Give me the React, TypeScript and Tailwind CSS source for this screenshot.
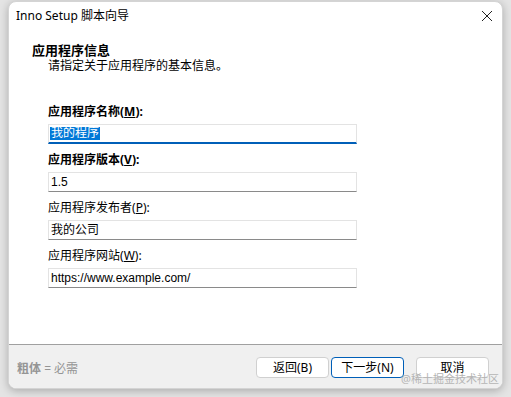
import React from "react";

const font = { fontFamily: '"Noto Sans", "Noto Sans CJK SC", sans-serif' };
const inputFont = { fontFamily: '"Liberation Sans", "Noto Sans CJK SC", sans-serif' };

function Field({
  label,
  hotkey,
  bold,
  value,
  focused,
}: {
  label: string;
  hotkey: string;
  bold?: boolean;
  value: string;
  focused?: boolean;
}) {
  return (
    <div className="flex flex-col">
      <div className={`h-[16px] leading-[16px] text-[12px] text-black ${bold ? "font-bold" : ""}`}>
        {label}(<span className="underline">{hotkey}</span>):
      </div>
      <div
        className={`mt-[4px] h-[20px] w-[309px] bg-white border border-[#e3e3e3] flex items-center px-[1px] text-[12px] ${
          focused ? "border-b-2 border-b-[#005fb8]" : "border-b-[#8a8a8a]"
        }`}
        style={inputFont}
      >
        {focused ? (
          <span className="bg-[#0078d7] text-white leading-[13px] px-[1px]">{value}</span>
        ) : (
          <span className="text-black leading-[16px] px-[1px]">{value}</span>
        )}
      </div>
    </div>
  );
}

export default function App() {
  return (
    <div className="w-[511px] h-[397px] bg-[#e4e4e4] pl-[8px] pt-[1px] overflow-hidden" style={font}>
      <div className="w-[495px] h-[388px] bg-white rounded-[8px] border border-[#d4d4d4] shadow-[0_2px_8px_rgba(0,0,0,0.25)] flex flex-col overflow-hidden">
        <div className="h-[28px] flex items-center justify-between pl-[7px] pr-[8px]">
          <span className="text-[12px] text-black">Inno Setup 脚本向导</span>
          <svg width="12" height="12" viewBox="0 0 12 12" className="mr-[1px]">
            <path d="M1 1 L11 11 M11 1 L1 11" stroke="#222" strokeWidth="1" />
          </svg>
        </div>
        <div className="flex-1 flex flex-col pl-[23px] pt-[12px]">
          <div className="h-[16px] leading-[16px] text-[13px] font-bold text-black">应用程序信息</div>
          <div className="h-[16px] leading-[16px] text-[12px] text-black pl-[16px]">请指定关于应用程序的基本信息。</div>
          <div className="flex flex-col gap-[8px] pl-[16px] mt-[30px]">
            <Field label="应用程序名称" hotkey="M" bold value="我的程序" focused />
            <Field label="应用程序版本" hotkey="V" bold value="1.5" />
            <Field label="应用程序发布者" hotkey="P" value="我的公司" />
            <Field label="应用程序网站" hotkey="W" value="https://www.example.com/" />
          </div>
        </div>
        <div className="h-[44px] border-t border-[#a0a0a0] bg-[#f0f0f0] flex items-start pl-[8px] relative">
          <div className="mt-[15px] text-[12px] text-[#959595]">
            <span className="font-bold">粗体</span> = 必需
          </div>
          <div className="ml-auto flex mt-[12px] mr-[13px]">
            <div className="w-[73px] h-[21px] bg-white border border-[#d0d0d0] rounded-[4px] flex items-center justify-center text-[12px] text-black">
              返回(B)
            </div>
            <div className="ml-[2px] w-[73px] h-[21px] bg-white border border-[#005fb8] rounded-[4px] flex items-center justify-center text-[12px] text-black">
              下一步(N)
            </div>
            <div className="ml-[12px] w-[73px] h-[21px] bg-white border border-[#d0d0d0] rounded-[4px] flex items-center justify-center text-[12px] text-black">
              取消
            </div>
          </div>
          <div className="absolute right-[3px] bottom-[2px] text-[11px] text-[#b5b5b5] leading-[14px]">
            @稀土掘金技术社区
          </div>
        </div>
      </div>
    </div>
  );
}
